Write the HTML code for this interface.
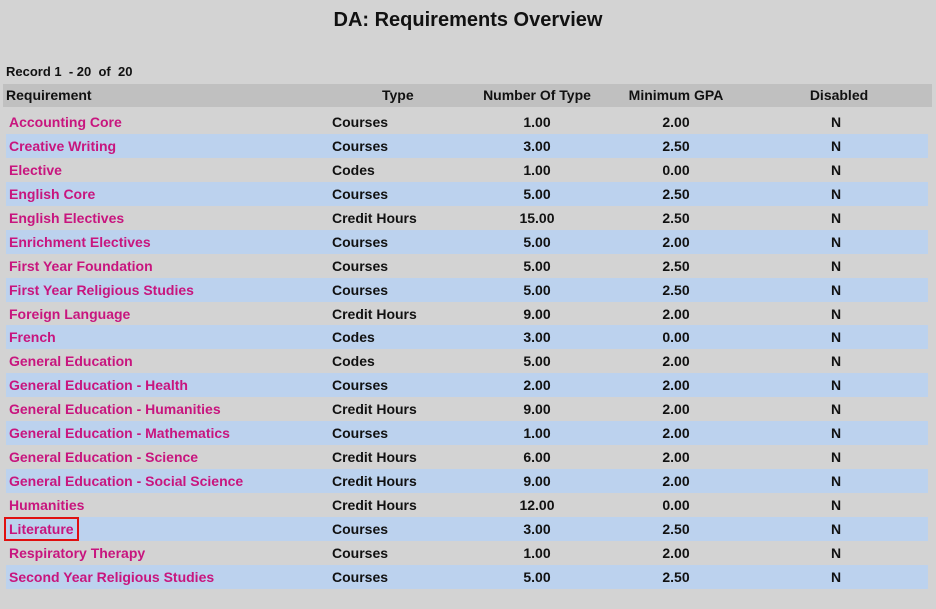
<!DOCTYPE html>
<html><head><style>
body{margin:0;background:#d3d3d3;width:936px;height:609px;font-family:"Liberation Sans",sans-serif;font-weight:bold;font-size:14px;color:#111;position:relative;overflow:hidden}
h1{position:absolute;top:8px;left:0;width:936px;text-align:center;margin:0;font-size:20px;line-height:24px;color:#111}
.rec{position:absolute;left:6px;top:64px;font-size:13px}
.hdr{position:absolute;left:3px;top:84px;width:929px;height:23px;background:#c0c0c0}
.row{position:absolute;left:6px;width:922px;height:24px}
.row.b{background:#bcd2ee}
.c{position:absolute;top:0;line-height:24px;white-space:nowrap}
.hdr .c{line-height:23px}
.r{color:#c8157e;left:3px}
.t{left:326px}
.n{left:471px;width:120px;text-align:center}
.g{left:610px;width:120px;text-align:center}
.d{left:770px;width:120px;text-align:center}
.box{outline:2px solid #e01010;outline-offset:1px;padding:0 2px;margin-left:-2px;line-height:18px;top:3px}
</style></head><body>
<h1>DA: Requirements Overview</h1>
<div class="rec">Record 1 &nbsp;- 20 &nbsp;of &nbsp;20</div>
<div class="hdr"><span class="c" style="left:3px">Requirement</span><span class="c" style="left:379px">Type</span><span class="c" style="left:474px;width:120px;text-align:center">Number Of Type</span><span class="c" style="left:613px;width:120px;text-align:center">Minimum GPA</span><span class="c" style="left:776px;width:120px;text-align:center">Disabled</span></div>
<div class="row" style="top:110px"><span class="c r">Accounting Core</span><span class="c t">Courses</span><span class="c n">1.00</span><span class="c g">2.00</span><span class="c d">N</span></div>
<div class="row b" style="top:134px"><span class="c r">Creative Writing</span><span class="c t">Courses</span><span class="c n">3.00</span><span class="c g">2.50</span><span class="c d">N</span></div>
<div class="row" style="top:158px"><span class="c r">Elective</span><span class="c t">Codes</span><span class="c n">1.00</span><span class="c g">0.00</span><span class="c d">N</span></div>
<div class="row b" style="top:182px"><span class="c r">English Core</span><span class="c t">Courses</span><span class="c n">5.00</span><span class="c g">2.50</span><span class="c d">N</span></div>
<div class="row" style="top:206px"><span class="c r">English Electives</span><span class="c t">Credit Hours</span><span class="c n">15.00</span><span class="c g">2.50</span><span class="c d">N</span></div>
<div class="row b" style="top:230px"><span class="c r">Enrichment Electives</span><span class="c t">Courses</span><span class="c n">5.00</span><span class="c g">2.00</span><span class="c d">N</span></div>
<div class="row" style="top:254px"><span class="c r">First Year Foundation</span><span class="c t">Courses</span><span class="c n">5.00</span><span class="c g">2.50</span><span class="c d">N</span></div>
<div class="row b" style="top:278px"><span class="c r">First Year Religious Studies</span><span class="c t">Courses</span><span class="c n">5.00</span><span class="c g">2.50</span><span class="c d">N</span></div>
<div class="row" style="top:302px"><span class="c r">Foreign Language</span><span class="c t">Credit Hours</span><span class="c n">9.00</span><span class="c g">2.00</span><span class="c d">N</span></div>
<div class="row b" style="top:325px"><span class="c r">French</span><span class="c t">Codes</span><span class="c n">3.00</span><span class="c g">0.00</span><span class="c d">N</span></div>
<div class="row" style="top:349px"><span class="c r">General Education</span><span class="c t">Codes</span><span class="c n">5.00</span><span class="c g">2.00</span><span class="c d">N</span></div>
<div class="row b" style="top:373px"><span class="c r">General Education - Health</span><span class="c t">Courses</span><span class="c n">2.00</span><span class="c g">2.00</span><span class="c d">N</span></div>
<div class="row" style="top:397px"><span class="c r">General Education - Humanities</span><span class="c t">Credit Hours</span><span class="c n">9.00</span><span class="c g">2.00</span><span class="c d">N</span></div>
<div class="row b" style="top:421px"><span class="c r">General Education - Mathematics</span><span class="c t">Courses</span><span class="c n">1.00</span><span class="c g">2.00</span><span class="c d">N</span></div>
<div class="row" style="top:445px"><span class="c r">General Education - Science</span><span class="c t">Credit Hours</span><span class="c n">6.00</span><span class="c g">2.00</span><span class="c d">N</span></div>
<div class="row b" style="top:469px"><span class="c r">General Education - Social Science</span><span class="c t">Credit Hours</span><span class="c n">9.00</span><span class="c g">2.00</span><span class="c d">N</span></div>
<div class="row" style="top:493px"><span class="c r">Humanities</span><span class="c t">Credit Hours</span><span class="c n">12.00</span><span class="c g">0.00</span><span class="c d">N</span></div>
<div class="row b" style="top:517px"><span class="c r box">Literature</span><span class="c t">Courses</span><span class="c n">3.00</span><span class="c g">2.50</span><span class="c d">N</span></div>
<div class="row" style="top:541px"><span class="c r">Respiratory Therapy</span><span class="c t">Courses</span><span class="c n">1.00</span><span class="c g">2.00</span><span class="c d">N</span></div>
<div class="row b" style="top:565px"><span class="c r">Second Year Religious Studies</span><span class="c t">Courses</span><span class="c n">5.00</span><span class="c g">2.50</span><span class="c d">N</span></div>
</body></html>
